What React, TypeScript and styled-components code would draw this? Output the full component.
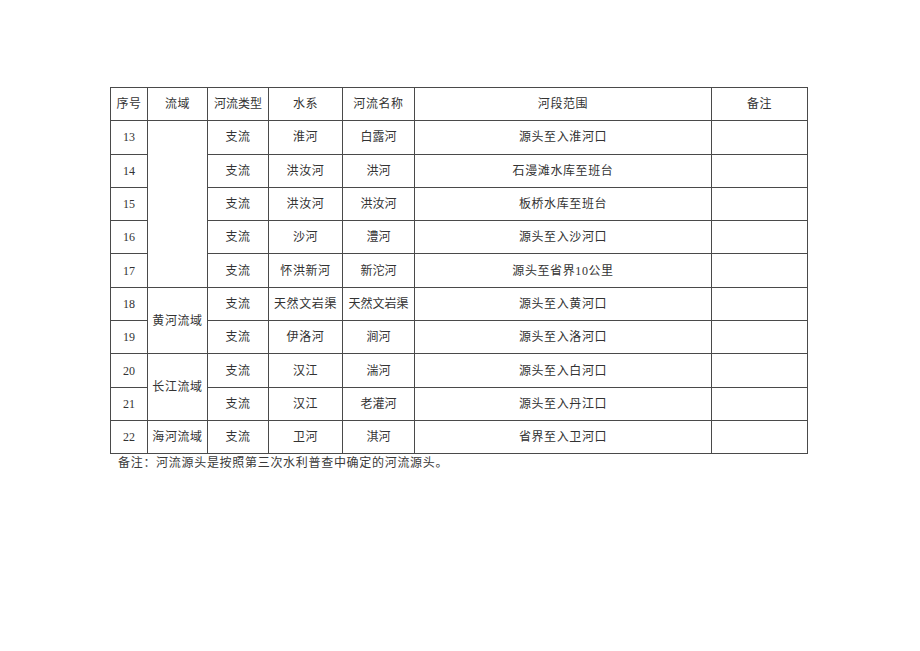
import React from "react";
import styled, { createGlobalStyle } from "styled-components";

const GlobalStyle = createGlobalStyle`
  html, body {
    margin: 0;
    padding: 0;
    background: #ffffff;
  }
  body {
    font-family: "Liberation Serif", "Noto Sans CJK SC", serif;
    color: #333333;
  }
`;

const Page = styled.div`
  width: 920px;
  height: 651px;
  padding: 87px 0 0 110px;
  box-sizing: border-box;
`;

const Table = styled.table`
  width: 698px;
  border-collapse: collapse;
  table-layout: fixed;
  font-size: 12px;
`;

const Cell = styled.td<{ $tight?: boolean }>`
  border: 1px solid #4a4a4a;
  height: 32.3px;
  padding: 0;
  text-align: center;
  vertical-align: middle;
  white-space: nowrap;
  letter-spacing: ${(p) => (p.$tight ? "0" : "0.6px")};
  line-height: 14px;
`;

const HeadCell = styled(Cell).attrs({ as: "th" })`
  font-weight: normal;
`;

const Note = styled.div`
  margin: 1px 0 0 8px;
  font-size: 12px;
  line-height: 16px;
  letter-spacing: 0.7px;
  color: #3a3a3a;
`;

type Row = {
  no: number;
  basin?: string;
  span?: number;
  system: string;
  name: string;
  range: string;
};

const rows: Row[] = [
  { no: 13, basin: "", span: 5, system: "淮河", name: "白露河", range: "源头至入淮河口" },
  { no: 14, system: "洪汝河", name: "洪河", range: "石漫滩水库至班台" },
  { no: 15, system: "洪汝河", name: "洪汝河", range: "板桥水库至班台" },
  { no: 16, system: "沙河", name: "澧河", range: "源头至入沙河口" },
  { no: 17, system: "怀洪新河", name: "新沱河", range: "源头至省界10公里" },
  { no: 18, basin: "黄河流域", span: 2, system: "天然文岩渠", name: "天然文岩渠", range: "源头至入黄河口" },
  { no: 19, system: "伊洛河", name: "涧河", range: "源头至入洛河口" },
  { no: 20, basin: "长江流域", span: 2, system: "汉江", name: "湍河", range: "源头至入白河口" },
  { no: 21, system: "汉江", name: "老灌河", range: "源头至入丹江口" },
  { no: 22, basin: "海河流域", span: 1, system: "卫河", name: "淇河", range: "省界至入卫河口" },
];

const widths = [37, 60, 61, 74, 72, 297, 96];

export default function App() {
  return (
    <Page>
      <GlobalStyle />
      <Table>
        <colgroup>
          {widths.map((w, i) => (
            <col key={i} style={{ width: w }} />
          ))}
        </colgroup>
        <thead>
          <tr>
            <HeadCell>序号</HeadCell>
            <HeadCell>流域</HeadCell>
            <HeadCell $tight>河流类型</HeadCell>
            <HeadCell>水系</HeadCell>
            <HeadCell>河流名称</HeadCell>
            <HeadCell>河段范围</HeadCell>
            <HeadCell>备注</HeadCell>
          </tr>
        </thead>
        <tbody>
          {rows.map((r) => (
            <tr key={r.no}>
              <Cell $tight>{r.no}</Cell>
              {r.span !== undefined && <Cell rowSpan={r.span}>{r.basin}</Cell>}
              <Cell>支流</Cell>
              <Cell>{r.system}</Cell>
              <Cell $tight>{r.name}</Cell>
              <Cell>{r.range}</Cell>
              <Cell />
            </tr>
          ))}
        </tbody>
      </Table>
      <Note>备注：河流源头是按照第三次水利普查中确定的河流源头。</Note>
    </Page>
  );
}
